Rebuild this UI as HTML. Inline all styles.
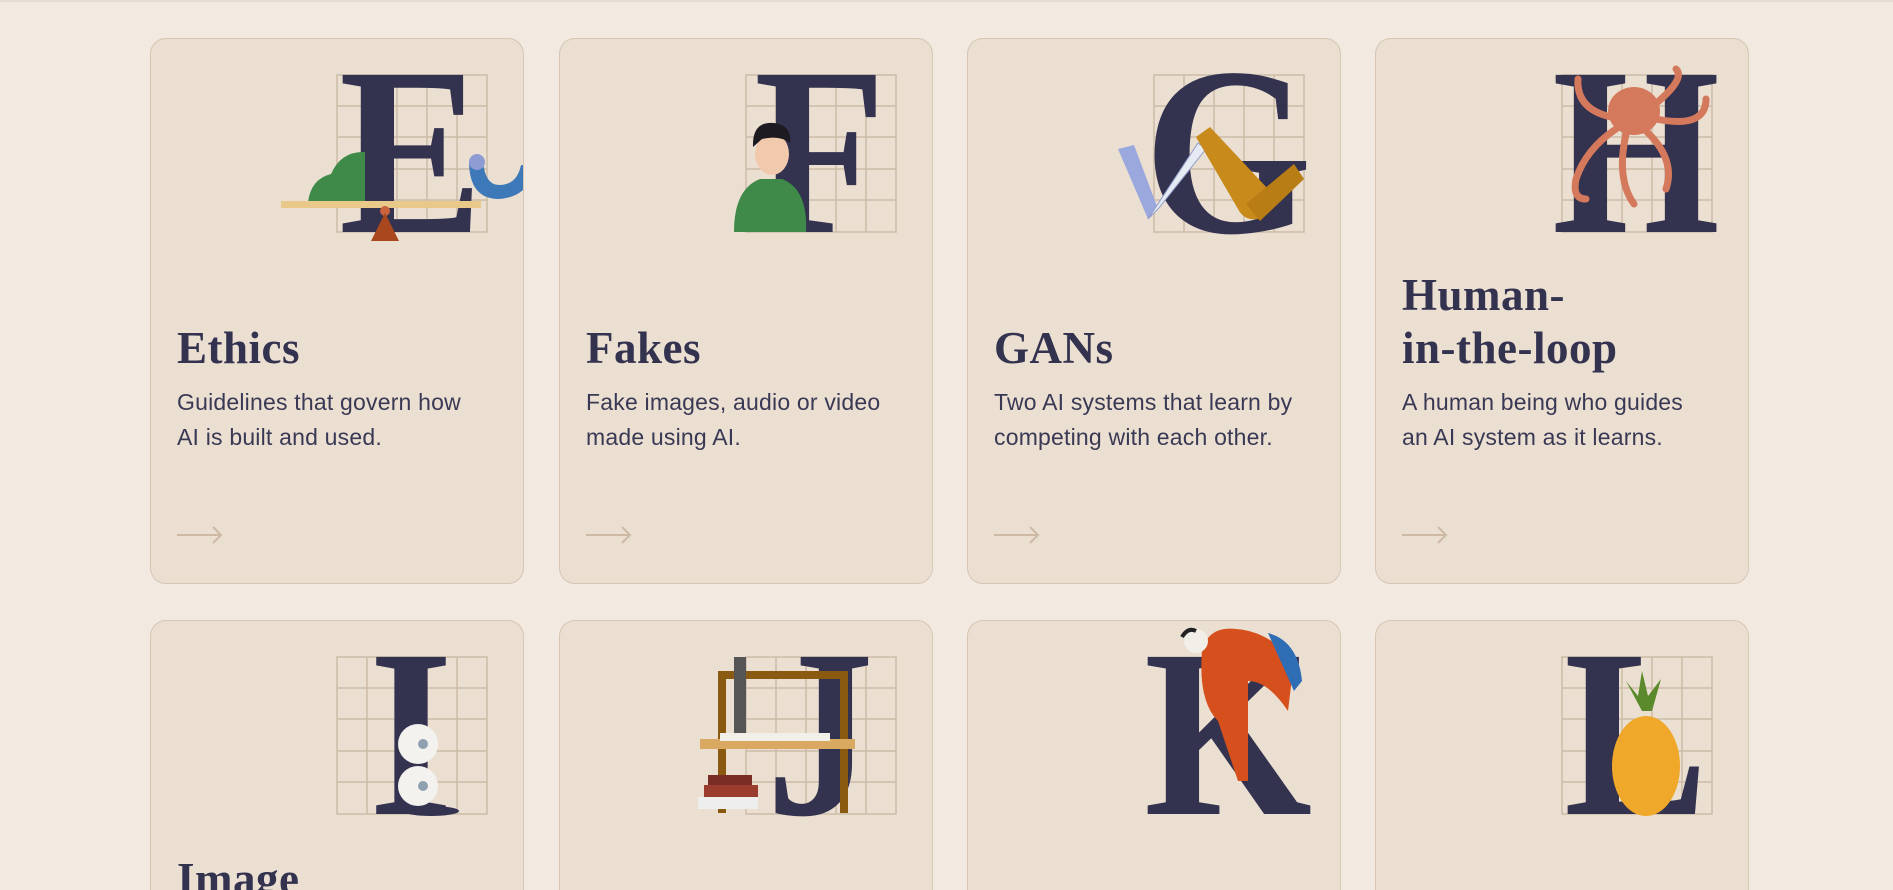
<!DOCTYPE html>
<html style="width:1893px;height:890px;overflow:hidden"><head><meta charset="utf-8"><style>
*{margin:0;padding:0;box-sizing:border-box}
body{width:1893px;height:890px;overflow:hidden;background:#f2e9e0;font-family:"Liberation Sans",sans-serif;position:relative;border-top:2px solid #e6dcd2}
.card{position:absolute;width:374px;height:546px;background:#ebdfd1;border:1px solid #d6c6b3;border-radius:16px;overflow:hidden}
.r2{height:290px;border-bottom:none;border-radius:16px 16px 0 0}
.ill{position:absolute;left:130px;top:0;width:260px;height:230px}
.t{position:absolute;left:26px;bottom:208px;font-family:"Liberation Serif",serif;font-weight:bold;font-size:45px;line-height:53px;color:#33324f;letter-spacing:0.5px}
.d{position:absolute;left:26px;top:346px;width:306px;font-size:23px;line-height:35px;color:#3a3955;letter-spacing:0.2px}
.a{position:absolute;left:26px;top:486px}
</style></head><body>
<svg width="0" height="0" style="position:absolute"><defs>
<g id="grid" stroke="#cdbba7" stroke-width="1.5" fill="none">
<rect x="56" y="36" width="150" height="157"/>
<path d="M86 36V193M116 36V193M146 36V193M176 36V193M56 67H206M56 98H206M56 130H206M56 161H206"/>
</g>
<g id="arr" stroke="#cdb9a5" stroke-width="2" fill="none"><path d="M0 10H44M36 2L44 10L36 18"/></g>
</defs></svg>

<div class="card" style="left:150px;top:36px">
<svg class="ill" viewBox="0 0 260 230"><use href="#grid"/>
<text x="130" y="193" text-anchor="middle" font-family="Liberation Serif" font-weight="bold" font-size="240" fill="#33324f" transform="translate(130 0) scale(0.9 1) translate(-130 0)">E</text>
<path d="M27 163Q30 140 50 135Q60 112 84 113V163Z" fill="#3f8a48"/>
<path d="M188 122Q188 160 218 160Q248 158 254 128L240 126Q236 146 218 146Q204 146 202 122Z" fill="#3d78b8"/>
<circle cx="196" cy="123" r="8" fill="#8f9bd3"/>
<rect x="0" y="162" width="200" height="7" fill="#e8c98a"/>
<circle cx="104" cy="172" r="5" fill="#c9623d"/><path d="M104 174L118 202H90Z" fill="#a9481f"/>
</svg>
<div class="t">Ethics</div><div class="d">Guidelines that govern how AI is built and used.</div>
<svg class="a" width="46" height="20"><use href="#arr"/></svg></div>

<div class="card" style="left:559px;top:36px">
<svg class="ill" viewBox="0 0 260 230"><use href="#grid"/>
<text x="130" y="193" text-anchor="middle" font-family="Liberation Serif" font-weight="bold" font-size="240" fill="#33324f" transform="translate(130 0) scale(0.9 1) translate(-130 0)">F</text>
<path d="M44 193Q44 150 70 140H92Q118 150 116 193Z" fill="#3f8a48"/>
<ellipse cx="82" cy="115" rx="17" ry="21" fill="#f1c9ad"/>
<path d="M63 108Q62 82 84 84Q102 86 100 104Q90 96 72 100Z" fill="#1d1a22"/>
</svg>
<div class="t">Fakes</div><div class="d">Fake images, audio or video made using AI.</div>
<svg class="a" width="46" height="20"><use href="#arr"/></svg></div>

<div class="card" style="left:967px;top:36px">
<svg class="ill" viewBox="0 0 260 230"><use href="#grid"/>
<text x="130" y="193" text-anchor="middle" font-family="Liberation Serif" font-weight="bold" font-size="240" fill="#33324f" transform="translate(130 0) scale(0.9 1) translate(-130 0)">G</text>
<path d="M20 110L36 106L60 170L50 180Z" fill="#9aa8de"/>
<path d="M50 180L60 170L108 110L100 104Z" fill="#e6eaf2" stroke="#8f9cc9"/>
<path d="M98 98L112 88L170 150L160 180Q146 182 140 170Z" fill="#c88a1a"/>
<path d="M148 165L196 125L206 140L162 182Z" fill="#b87d15"/>
</svg>
<div class="t">GANs</div><div class="d">Two AI systems that learn by competing with each other.</div>
<svg class="a" width="46" height="20"><use href="#arr"/></svg></div>

<div class="card" style="left:1375px;top:36px">
<svg class="ill" viewBox="0 0 260 230"><use href="#grid"/>
<text x="130" y="193" text-anchor="middle" font-family="Liberation Serif" font-weight="bold" font-size="240" fill="#33324f" transform="translate(130 0) scale(0.9 1) translate(-130 0)">H</text>
<ellipse cx="128" cy="72" rx="26" ry="24" fill="#d4795c"/>
<g stroke="#d4795c" stroke-width="7" fill="none" stroke-linecap="round">
<path d="M110 90Q80 110 70 140Q66 160 80 160"/><path d="M120 95Q110 140 128 165"/><path d="M140 92Q170 120 160 150"/><path d="M150 80Q200 90 200 60"/><path d="M105 78Q70 70 72 40"/><path d="M148 66Q180 40 170 30"/></g>
</svg>
<div class="t">Human-<br>in-the-loop</div><div class="d">A human being who guides an AI system as it learns.</div>
<svg class="a" width="46" height="20"><use href="#arr"/></svg></div>

<div class="card r2" style="left:150px;top:618px">
<svg class="ill" viewBox="0 0 260 230"><use href="#grid"/>
<text x="130" y="193" text-anchor="middle" font-family="Liberation Serif" font-weight="bold" font-size="240" fill="#33324f" transform="translate(130 0) scale(0.9 1) translate(-130 0)">I</text>
<ellipse cx="150" cy="190" rx="28" ry="5" fill="#33324f"/>
<circle cx="137" cy="123" r="20" fill="#f4f2ef"/><circle cx="137" cy="165" r="20" fill="#f4f2ef"/>
<circle cx="142" cy="123" r="5" fill="#8fa0b0"/><circle cx="142" cy="165" r="5" fill="#8fa0b0"/>
</svg>
<div class="t" style="bottom:auto;top:232px">Image</div></div>

<div class="card r2" style="left:559px;top:618px">
<svg class="ill" viewBox="0 0 260 230"><use href="#grid"/>
<text x="130" y="193" text-anchor="middle" font-family="Liberation Serif" font-weight="bold" font-size="240" fill="#33324f" transform="translate(130 0) scale(0.9 1) translate(-130 0)">J</text>
<g fill="#8a5a10"><rect x="28" y="50" width="8" height="142"/><rect x="150" y="50" width="8" height="142"/><rect x="28" y="50" width="130" height="8"/></g>
<rect x="10" y="118" width="155" height="10" fill="#d9a861"/><rect x="30" y="112" width="110" height="8" fill="#f2efe8"/>
<rect x="44" y="36" width="12" height="76" fill="#555"/>
<rect x="8" y="176" width="60" height="12" fill="#eee"/><rect x="14" y="164" width="54" height="12" fill="#9b3d2e"/><rect x="18" y="154" width="44" height="10" fill="#7a2d24"/>
</svg></div>

<div class="card r2" style="left:967px;top:618px">
<svg class="ill" viewBox="0 0 260 230">
<text x="130" y="193" text-anchor="middle" font-family="Liberation Serif" font-weight="bold" font-size="240" fill="#33324f" transform="translate(130 0) scale(0.9 1) translate(-130 0)">K</text>
<path d="M104 30Q110 5 138 8Q170 10 196 40L190 90Q170 60 150 60L150 160L140 160L120 100Q100 80 104 30Z" fill="#d5501c"/>
<path d="M170 12Q200 20 204 60L196 70Z" fill="#2f6db5"/><circle cx="98" cy="20" r="12" fill="#f2efe8"/>
<path d="M84 16Q90 6 98 10" stroke="#222" stroke-width="4" fill="none"/>
</svg></div>

<div class="card r2" style="left:1375px;top:618px">
<svg class="ill" viewBox="0 0 260 230"><use href="#grid"/>
<text x="130" y="193" text-anchor="middle" font-family="Liberation Serif" font-weight="bold" font-size="240" fill="#33324f" transform="translate(130 0) scale(0.9 1) translate(-130 0)">L</text>
<path d="M136 90L120 60L132 75L136 50L142 75L155 58L146 90Z" fill="#5a8a2c"/>
<ellipse cx="140" cy="145" rx="34" ry="50" fill="#f0a82a"/>
</svg></div>
</body></html>
